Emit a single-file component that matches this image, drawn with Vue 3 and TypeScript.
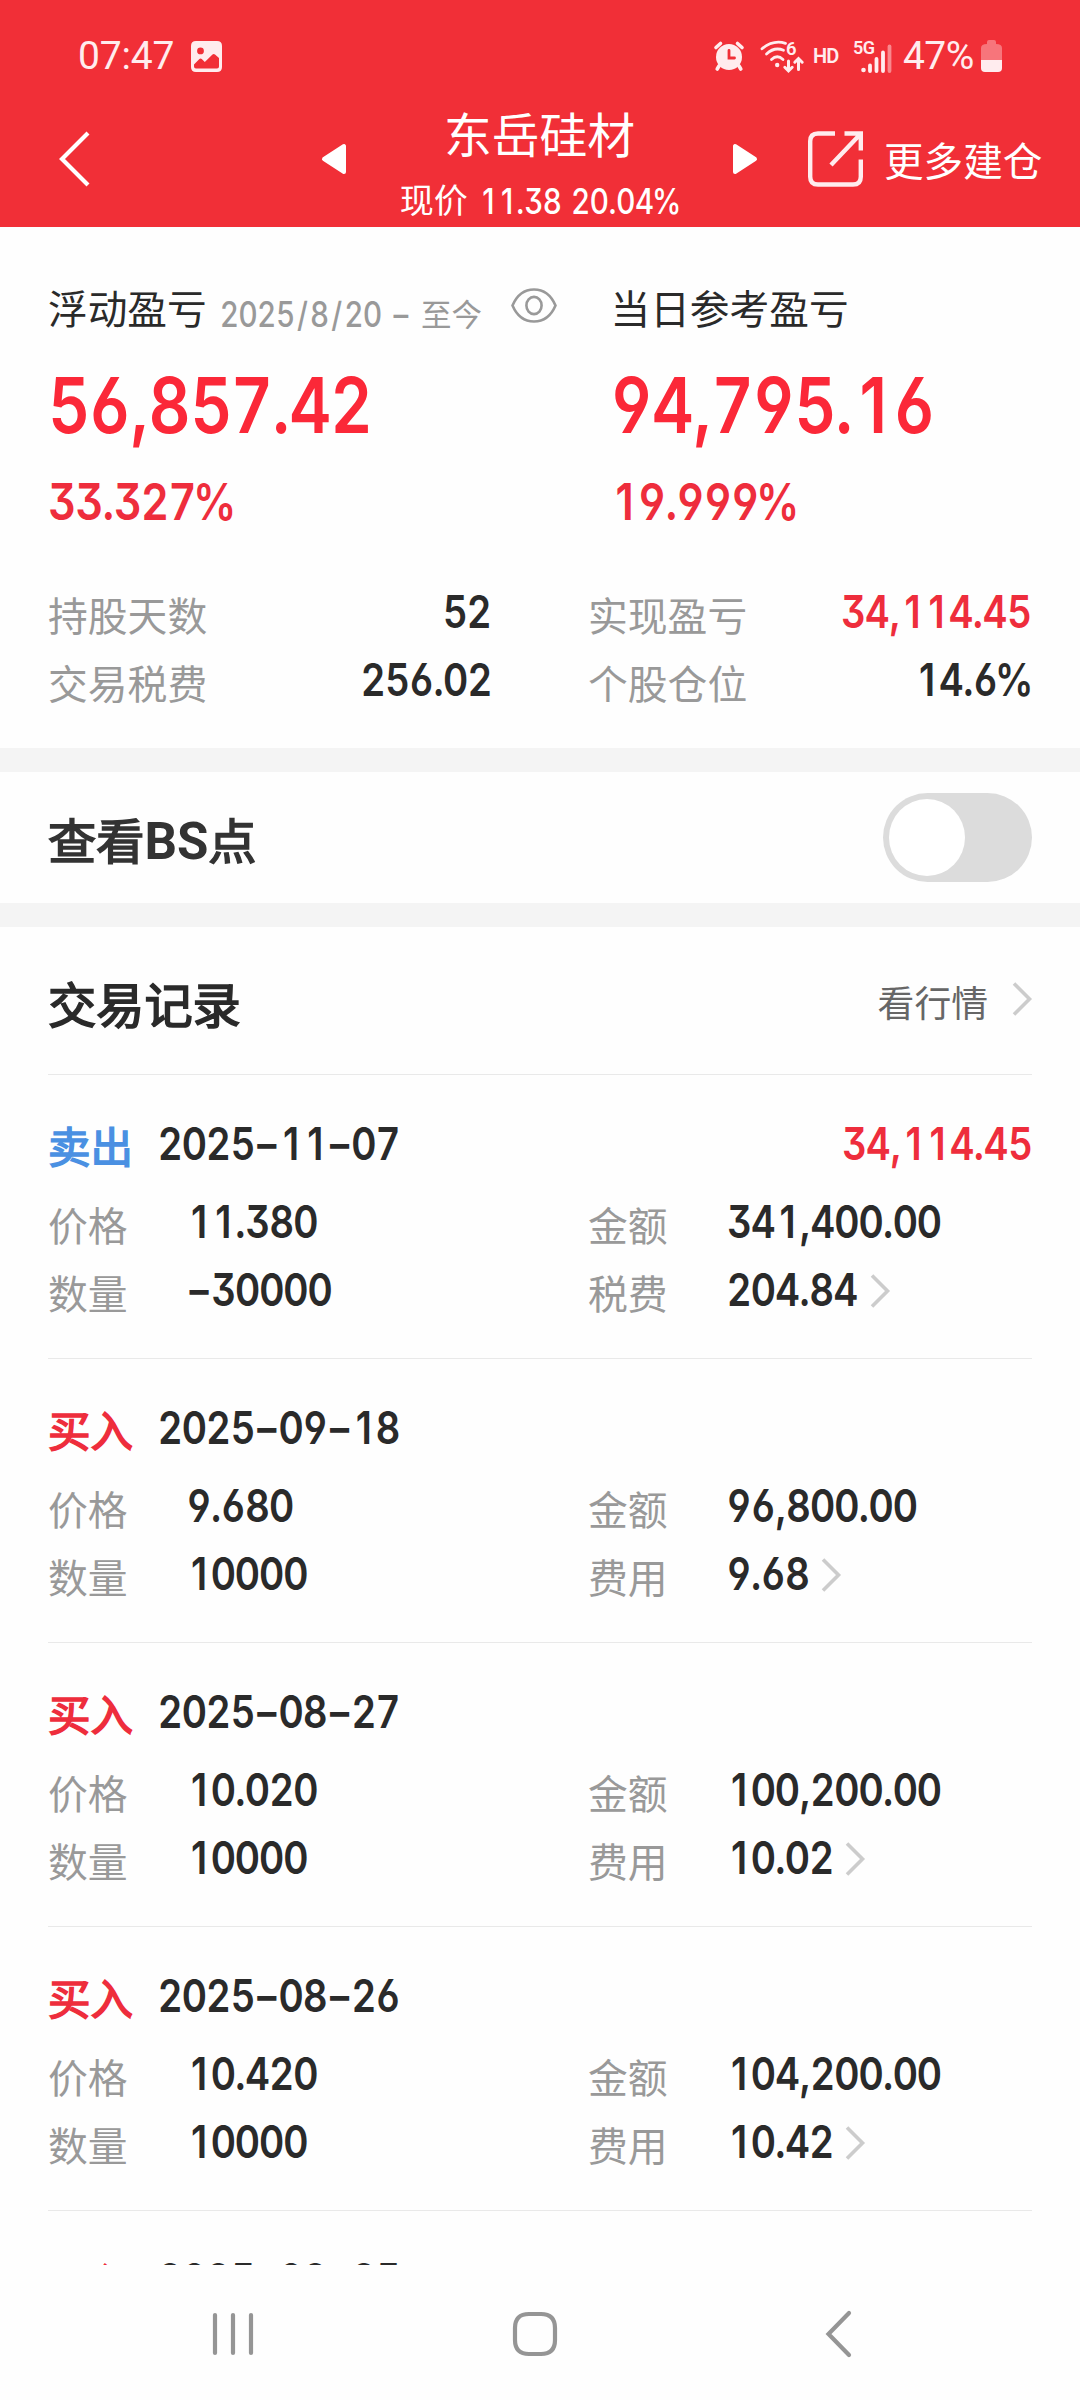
<script setup lang="ts">
import { h, ref } from 'vue'

interface Trade {
  side: 'buy' | 'sell'
  date: string
  profit?: string
  details?: {
    price: string
    quantity: string
    amount: string
    feeLabel: string
    fee: string
  }
}

const trades: Trade[] = [
  { side: 'sell', date: '2025–11–07', profit: '34,114.45', details: { price: '11.380', quantity: '–30000', amount: '341,400.00', feeLabel: '税费', fee: '204.84' } },
  { side: 'buy', date: '2025–09–18', details: { price: '9.680', quantity: '10000', amount: '96,800.00', feeLabel: '费用', fee: '9.68' } },
  { side: 'buy', date: '2025–08–27', details: { price: '10.020', quantity: '10000', amount: '100,200.00', feeLabel: '费用', fee: '10.02' } },
  { side: 'buy', date: '2025–08–26', details: { price: '10.420', quantity: '10000', amount: '104,200.00', feeLabel: '费用', fee: '10.42' } },
  { side: 'buy', date: '2025–08–25' },
]

const showPoints = ref(false)

// Cell widths of the condensed tabular figures, in em.
const cells: Record<string, number> = { '.': 0.217, ',': 0.239, '–': 0.528, '%': 0.72, '/': 0.44, ' ': 0.27 }
const CONDENSE = 0.85

// Figures set in fixed cells; the box is exactly as tall as the digits.
const Num = (props: { value: string; size?: number }) => {
  const size = props.size ?? 46
  let x = 0
  const xs: string[] = []
  for (const ch of props.value) {
    const w = (cells[ch] ?? 0.526) * size
    xs.push(((x + w / 2) / CONDENSE).toFixed(2))
    x += w
  }
  const cap = Math.round(size * 0.711)
  return h('svg', { class: 'num', width: x.toFixed(1), height: cap }, [
    h('text', {
      x: xs.join(' '),
      y: cap,
      'text-anchor': 'middle',
      'font-size': (size * 0.978).toFixed(2),
      transform: `scale(${CONDENSE} 1)`,
    }, props.value),
  ])
}
Num.props = ['value', 'size']
</script>

<template>
  <div class="screen">
    <header class="top">
      <div class="status">
        <span class="clock">07:47</span>
        <svg class="photo" width="31" height="31" viewBox="0 0 31 31">
          <path fill-rule="evenodd" fill="#ffecee" d="M5 0H26Q31 0 31 5V26Q31 31 26 31H5Q0 31 0 26V5Q0 0 5 0ZM9.5 6.5A3.4 3.4 0 1 0 9.5 13.3A3.4 3.4 0 1 0 9.5 6.5ZM3 23.5V25.5Q3 27.5 5 27.5H26Q28 27.5 28 25.500V17L24 13.500Q22.700 12.500 21.500 13.500L13.800 21L10.800 18Q9.600 17 8.400 18Z" />
        </svg>
        <div class="signals">
          <svg class="alarm" width="30" height="30" viewBox="0 0 30 30">
            <circle cx="15" cy="16" r="13" fill="#ffecee" />
            <path d="M2 6.500L6.500 2.500M28 6.500L23.500 2.500M5 25L3.200 28M25 25L26.800 28" stroke="#ffecee" stroke-width="3.600" stroke-linecap="round" />
            <path d="M15 9.500V17H20.500" fill="none" stroke="#f12f37" stroke-width="2.800" stroke-linecap="round" />
          </svg>
          <svg class="wifi" width="44" height="33" viewBox="0 0 44 33">
            <g fill="none" stroke="#ffecee" stroke-width="2.800" stroke-linecap="round">
              <path d="M2 8.800Q13 -0.500 25.500 3.300" />
              <path d="M6.500 14Q14.500 6.500 23.500 10.300" />
              <path d="M11.500 19.500Q17.300 14 23 19.500" />
              <path d="M28.500 21V30.500M24.800 27.300L28.500 31L32.200 27.300M38.500 29.500V19M34.800 22.200L38.500 18.500L42.200 22.200" stroke-width="3" />
            </g>
            <circle cx="17.200" cy="25" r="2.200" fill="#ffecee" />
            <text x="26" y="15" font-size="18.500" font-weight="600" fill="#ffecee">6</text>
          </svg>
          <span class="hd">HD</span>
          <svg class="cell" width="40" height="33" viewBox="0 0 40 33">
            <text x="0" y="13.500" font-size="18" font-weight="600" fill="#ffecee" textLength="22">5G</text>
            <circle cx="10.500" cy="30" r="2.300" fill="#ffecee" />
            <path d="M17 25.500V31M23.500 19V31M30 12.500V31" stroke="#ffecee" stroke-width="3.800" stroke-linecap="round" />
            <path d="M36.500 6.500V31" stroke="#f9888d" stroke-width="3.800" stroke-linecap="round" />
          </svg>
          <span class="level">47%</span>
          <svg class="battery" width="21" height="32" viewBox="0 0 21 32">
            <path d="M6 4V2Q6 0 8 0H13Q15 0 15 2V4Q21 4 21 8V20H0V8Q0 4 6 4Z" fill="#f7757b" />
            <path d="M0 20H21V28Q21 32 17 32H4Q0 32 0 28Z" fill="#ffecee" />
          </svg>
        </div>
      </div>

      <div class="titlebar">
        <div class="side">
          <svg class="back" width="32" height="56" viewBox="0 0 32 56">
            <path d="M29 2L3 28L29 54" fill="none" stroke="#fff" stroke-width="4.200" />
          </svg>
          <svg width="26" height="32" viewBox="0 0 26 32">
            <path d="M3 16L23 3V29Z" fill="#fff" stroke="#fff" stroke-width="4" stroke-linejoin="round" />
          </svg>
        </div>
        <div class="heading">
          <h1>东岳硅材</h1>
          <div class="quote"><span>现价</span><Num value="11.38 20.04%" :size="35.6" /></div>
        </div>
        <div class="side">
          <svg width="26" height="32" viewBox="0 0 26 32">
            <path d="M23 16L3 3V29Z" fill="#fff" stroke="#fff" stroke-width="4" stroke-linejoin="round" />
          </svg>
          <svg class="share" width="55" height="56" viewBox="0 0 55 56">
            <path d="M27 2.500H10Q2.200 2.500 2.200 10.300V45.700Q2.200 53.500 10 53.500H45Q52.800 53.500 52.800 45.700V28.500" fill="none" stroke="#ffecee" stroke-width="4.400" />
            <path d="M36.500 2.500H52.800V19.500M52 3.500L23 34" fill="none" stroke="#ffecee" stroke-width="4.400" />
          </svg>
          <span class="more">更多建仓</span>
        </div>
      </div>
    </header>

    <main class="content">
      <section class="summary">
        <div class="totals">
          <div class="total">
            <div class="caption">
              <span class="name">浮动盈亏</span>
              <span class="period"><Num value="2025/8/20 –" :size="35.5" /><span>至今</span></span>
              <svg class="eye" width="46" height="35" viewBox="0 0 46 35" fill="none" stroke="#999" stroke-width="2.600">
                <path d="M1.500 17.500C6 7 14 1.500 23 1.500S40 7 44.500 17.500C40 28 32 33.500 23 33.500S6 28 1.500 17.500Z" />
                <ellipse cx="23" cy="17.500" rx="7.600" ry="8.600" />
              </svg>
            </div>
            <Num class="big" value="56,857.42" :size="78.3" />
            <Num class="rate" value="33.327%" :size="52" />
          </div>
          <div class="total">
            <div class="caption"><span class="name">当日参考盈亏</span></div>
            <Num class="big" value="94,795.16" :size="78.3" />
            <Num class="rate" value="19.999%" :size="52" />
          </div>
        </div>
        <div class="stats">
          <div class="stat"><span class="label">持股天数</span><Num value="52" /></div>
          <div class="stat"><span class="label">实现盈亏</span><Num class="up" value="34,114.45" /></div>
          <div class="stat"><span class="label">交易税费</span><Num value="256.02" /></div>
          <div class="stat"><span class="label">个股仓位</span><Num value="14.6%" /></div>
        </div>
      </section>

      <section class="points">
        <h2>查看<b>BS</b>点</h2>
        <button class="toggle" :class="{ on: showPoints }" @click="showPoints = !showPoints"><i></i></button>
      </section>

      <section class="records">
        <div class="records-head">
          <h2>交易记录</h2>
          <span class="link">看行情</span>
          <svg class="chev" width="20" height="34" viewBox="0 0 20 34"><path d="M2 1.500L17.500 17L2 32.500" /></svg>
        </div>
        <article v-for="t in trades" :key="t.date" class="trade">
          <div class="trade-head">
            <span class="side-tag" :class="t.side">{{ t.side === 'sell' ? '卖出' : '买入' }}</span>
            <Num :value="t.date" />
            <Num v-if="t.profit" class="up gain" :value="t.profit" />
          </div>
          <div v-if="t.details" class="cells">
            <div class="cell-item"><span class="label">价格</span><Num :value="t.details.price" /></div>
            <div class="cell-item"><span class="label">金额</span><Num :value="t.details.amount" /></div>
            <div class="cell-item"><span class="label">数量</span><Num :value="t.details.quantity" /></div>
            <div class="cell-item">
              <span class="label">{{ t.details.feeLabel }}</span><Num :value="t.details.fee" />
              <svg class="chev" width="20" height="34" viewBox="0 0 20 34"><path d="M2 1.500L17.500 17L2 32.500" /></svg>
            </div>
          </div>
        </article>
      </section>
    </main>

    <nav class="system">
      <svg width="42" height="44" viewBox="0 0 42 44"><path d="M3 3V41M21 3V41M39 3V41" /></svg>
      <svg class="home" width="46" height="46" viewBox="0 0 46 46"><path d="M17 3H29Q43 3 43 17V29Q43 43 29 43H17Q3 43 3 29V17Q3 3 17 3Z" /></svg>
      <svg width="28" height="48" viewBox="0 0 28 48"><path d="M25 3L4.500 24L25 45" /></svg>
    </nav>
  </div>
</template>

<style>
body {
  margin: 0;
  background: #fefefe;
}
.num {
  display: block;
  flex: none;
  overflow: visible;
  fill: currentColor;
  font-family: Inter, Roboto, sans-serif;
  font-weight: 600;
  font-feature-settings: 'cv03', 'cv04', 'cv09', 'kern' 0;
}
</style>

<style scoped>
.screen {
  width: 1080px;
  height: 2400px;
  overflow: hidden;
  display: flex;
  flex-direction: column;
  background: #fefefe;
  color: #2a2a2a;
  font-family: 'Noto Sans CJK SC', sans-serif;
  font-weight: 400;
}
.screen svg {
  flex: none;
  overflow: visible;
}
h1,
h2 {
  margin: 0;
}
.top {
  height: 227px;
  flex: none;
  background: #f12f37;
  color: #fff;
}
.status {
  box-sizing: border-box;
  height: 108px;
  padding: 4px 78px 0;
  display: flex;
  align-items: center;
  font-family: Roboto, sans-serif;
  color: #ffecee;
}
.clock,
.level {
  font-size: 39px;
  line-height: 40px;
  letter-spacing: -0.6px;
}
.clock {
  letter-spacing: -0.2px;
}
.photo {
  margin-left: 17px;
}
.signals {
  margin-left: auto;
  display: flex;
  align-items: center;
}
.wifi {
  margin-left: 16px;
}
.hd {
  margin-left: 9px;
  width: 28px;
  font-size: 20px;
  line-height: 22px;
  font-weight: 600;
  letter-spacing: -0.8px;
}
.cell {
  margin-left: 12px;
}
.level {
  margin-left: 10px;
  width: 70px;
}
.battery {
  margin-left: 8px;
}
.titlebar {
  display: flex;
  padding-left: 59px;
}
.side {
  height: 102px;
  display: flex;
  align-items: center;
}
.back {
  margin-right: 230px;
}
.heading {
  width: 385px;
  display: flex;
  flex-direction: column;
  align-items: center;
}
h1 {
  font-size: 47.800px;
  line-height: 50px;
  font-weight: 400;
}
.quote {
  margin-top: 22px;
  height: 42px;
  display: flex;
  align-items: center;
}
.quote span {
  margin: 0 11px 4px 0;
  font-size: 34px;
  line-height: 36px;
}
.quote .num {
  font-weight: 550;
}
.share {
  margin-left: 50px;
}
.more {
  margin-left: 21px;
  font-size: 39.600px;
  line-height: 42px;
}
.content {
  flex: none;
  height: 2038px;
  overflow: hidden;
}
.summary {
  box-sizing: border-box;
  height: 521px;
  padding: 52px 48px 0;
}
.totals {
  display: grid;
  grid-template-columns: 562.500px 1fr;
}
.caption {
  height: 60px;
  display: flex;
  align-items: center;
}
.name {
  margin: 0 13px 4px 0;
  font-size: 39.700px;
  line-height: 44px;
}
.period {
  display: flex;
  align-items: center;
  margin-top: 10px;
  color: #999;
}
.period .num {
  font-weight: 500;
}
.period span {
  margin: 0 0 2px 11px;
  font-size: 30.500px;
  line-height: 34px;
}
.eye {
  margin: 0 0 7px 29px;
}
.big,
.rate {
  color: #fb2838;
}
.big {
  margin-top: 38px;
}
.rate {
  margin-top: 50px;
  color: #ee2d3c;
}
.up {
  color: #ee2d3c;
}
.stats {
  margin-top: 60px;
  display: grid;
  grid-template-columns: 443.500px 443px;
  column-gap: 96.500px;
}
.stat {
  height: 68px;
  display: flex;
  align-items: center;
  justify-content: space-between;
}
.stat .num,
.cell-item .num {
  margin-bottom: 6px;
}
.label {
  color: #999;
  font-size: 39.800px;
  line-height: 44px;
}
.points {
  box-sizing: border-box;
  height: 179px;
  padding: 0 48px;
  border-top: 24px solid #f4f4f4;
  border-bottom: 24px solid #f4f4f4;
  display: flex;
  align-items: center;
  justify-content: space-between;
}
h2 {
  margin-top: 2px;
  font-size: 48.200px;
  line-height: 56px;
  font-weight: 400;
  -webkit-text-stroke: 1.700px currentColor;
}
.points h2 {
  color: #333;
}
h2 b {
  font-family: Roboto, sans-serif;
  font-size: 51px;
  line-height: 1;
  font-weight: 700;
  -webkit-text-stroke: 0;
}
.toggle {
  box-sizing: border-box;
  width: 149px;
  height: 89px;
  padding: 6px;
  border: 0;
  border-radius: 45px;
  background: #dcdcdc;
  display: flex;
}
.toggle i {
  width: 76px;
  height: 77px;
  border-radius: 50%;
  background: #fff;
}
.toggle.on {
  background: #f12f37;
  justify-content: flex-end;
}
.records {
  padding: 0 48px;
}
.records-head {
  box-sizing: border-box;
  height: 148px;
  display: flex;
  align-items: center;
  border-bottom: 1px solid #e9e9e9;
}
.link {
  margin-left: auto;
  color: #666;
  font-size: 36.800px;
  line-height: 42px;
}
.chev {
  fill: none;
  stroke: #ccc;
  stroke-width: 3.600px;
  margin: 0 0 3px 11.500px;
}
.records-head .chev {
  margin-left: 24px;
}
.trade {
  box-sizing: border-box;
  height: 284px;
  padding-top: 36px;
  border-bottom: 1px solid #e9e9e9;
}
.trade-head {
  height: 68px;
  display: flex;
  align-items: center;
}
.trade-head .num {
  margin-bottom: 4px;
}
.side-tag {
  width: 110px;
  font-size: 42.500px;
  line-height: 48px;
  -webkit-text-stroke: 1.600px currentColor;
}
.sell {
  color: #4a90e2;
}
.buy {
  color: #ee2d3c;
}
.gain {
  margin-left: auto;
}
.cells {
  margin-top: 11px;
  display: grid;
  grid-template-columns: 540px 1fr;
}
.cell-item {
  height: 68px;
  display: flex;
  align-items: center;
}
.cell-item .label {
  width: 139px;
}
.system {
  flex: 1;
  display: flex;
  align-items: center;
  padding: 3px 0 0 212px;
}
.home {
  margin: 0 266px 0 258px;
}
.system svg {
  fill: none;
  stroke: #959595;
  stroke-width: 4.200px;
  stroke-linecap: round;
}
</style>
